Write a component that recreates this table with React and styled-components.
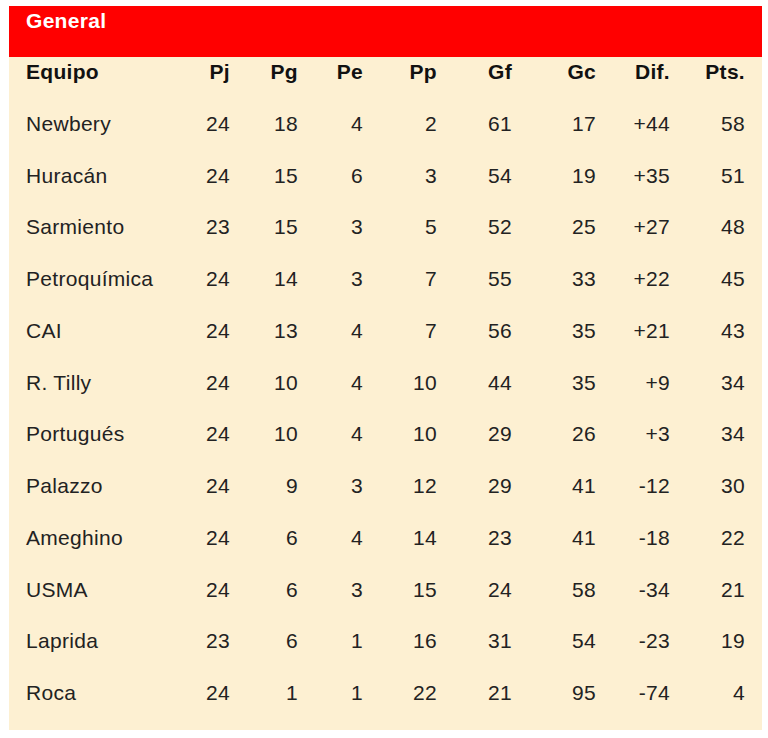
import React from "react";
import styled, { createGlobalStyle } from "styled-components";

const GlobalStyle = createGlobalStyle`
  body {
    margin: 0;
    background: #ffffff;
    font-family: "Liberation Sans", Arial, Helvetica, sans-serif;
    color: #1c1c1c;
  }
`;

const Page = styled.div`
  padding: 6px 0 8px 9px;
`;

const Panel = styled.div`
  width: 753px;
  background: #fdf0d2;
`;

const Title = styled.div`
  height: 51px;
  background: #ff0000;
  color: #ffffff;
  font-weight: bold;
  font-size: 21px;
  line-height: 24px;
  letter-spacing: 0.3px;
  padding: 3px 17px 0;
  box-sizing: border-box;
`;

const Table = styled.div`
  display: grid;
  grid-template-columns: 134px 70px 68px 65px 74px 75px 84px 74px 75px;
  grid-auto-rows: 51.75px;
  padding: 0 17px;
  font-size: 21px;
  line-height: 24px;
  letter-spacing: 0.3px;
`;

const Cell = styled.div`
  padding-top: 3px;
  text-align: ${p => (p.$left ? "left" : "right")};
  font-weight: ${p => (p.$head ? "bold" : "normal")};
  color: ${p => (p.$head ? "#111" : "#222")};
  white-space: nowrap;
`;

const headers = ["Equipo", "Pj", "Pg", "Pe", "Pp", "Gf", "Gc", "Dif.", "Pts."];

const rows = [
  ["Newbery", 24, 18, 4, 2, 61, 17, "+44", 58],
  ["Huracán", 24, 15, 6, 3, 54, 19, "+35", 51],
  ["Sarmiento", 23, 15, 3, 5, 52, 25, "+27", 48],
  ["Petroquímica", 24, 14, 3, 7, 55, 33, "+22", 45],
  ["CAI", 24, 13, 4, 7, 56, 35, "+21", 43],
  ["R. Tilly", 24, 10, 4, 10, 44, 35, "+9", 34],
  ["Portugués", 24, 10, 4, 10, 29, 26, "+3", 34],
  ["Palazzo", 24, 9, 3, 12, 29, 41, "-12", 30],
  ["Ameghino", 24, 6, 4, 14, 23, 41, "-18", 22],
  ["USMA", 24, 6, 3, 15, 24, 58, "-34", 21],
  ["Laprida", 23, 6, 1, 16, 31, 54, "-23", 19],
  ["Roca", 24, 1, 1, 22, 21, 95, "-74", 4],
];

export default function App() {
  return (
    <>
      <GlobalStyle />
      <Page>
        <Panel>
          <Title>General</Title>
          <Table>
            {headers.map((h, i) => (
              <Cell key={h} $head $left={i === 0}>{h}</Cell>
            ))}
            {rows.map(r =>
              r.map((v, i) => (
                <Cell key={r[0] + i} $left={i === 0}>{v}</Cell>
              ))
            )}
          </Table>
        </Panel>
      </Page>
    </>
  );
}
